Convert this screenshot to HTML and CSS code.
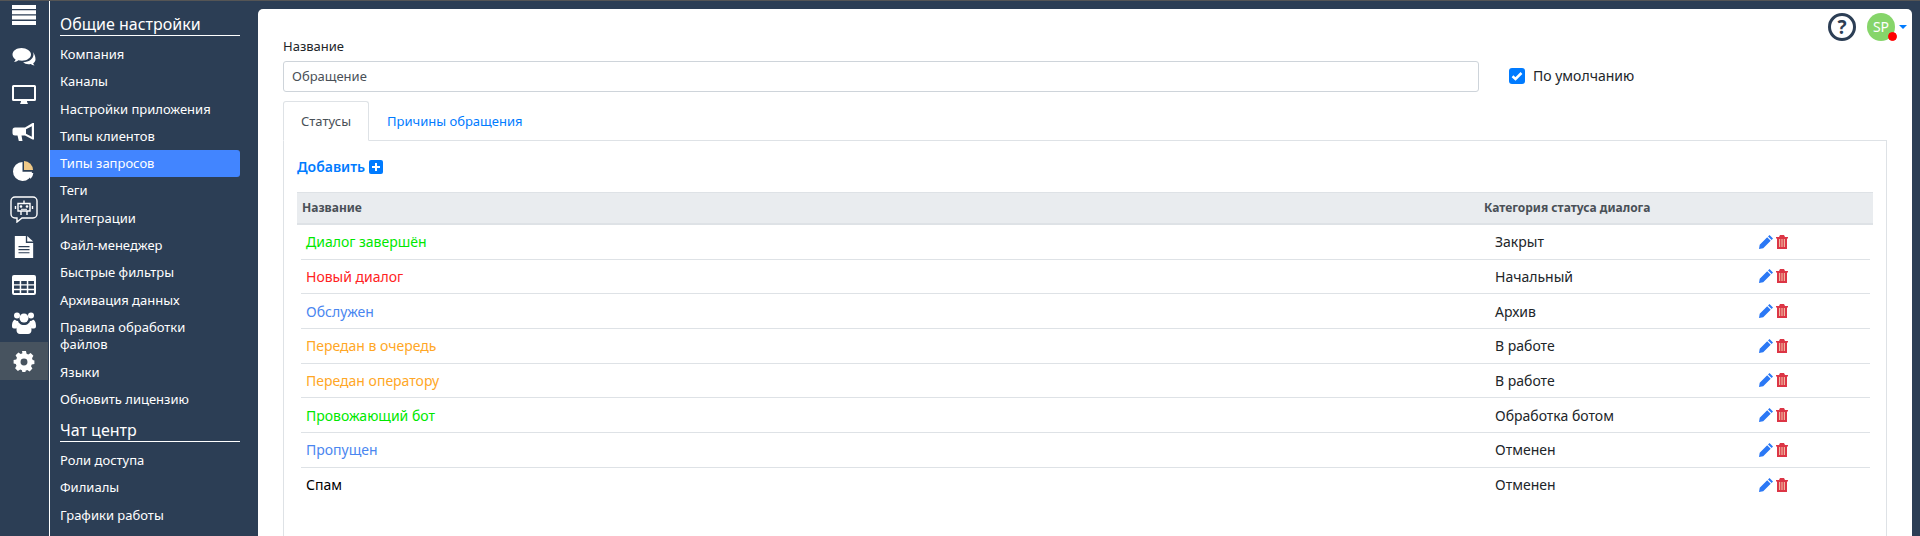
FILE: index.html
```html
<!DOCTYPE html>
<html lang="ru">
<head>
    <meta charset="UTF-8">
    <title>Типы запросов</title>
    <link rel="stylesheet" href="styles.css">
</head>
<body>
    <div class="app">
        <!-- Иконки разделов -->
        <nav class="rail">
            <a class="rail-item rail-top"><svg viewBox="0 0 24 20"><path d="M0 0h24v4H0zM0 5.300h24v4H0zM0 10.600h24v4H0zM0 15.900h24v4H0z"/></svg></a>
            <a class="rail-item"><svg viewBox="0 0 24 20"><path d="M9.500 1C4.500 1 .5 3.900.5 7.500c0 2 1.200 3.700 3.100 4.900-.3 1.100-1 2-1.700 2.700 1.600-.2 3.200-.9 4.400-1.800 1.100.3 2.300.4 3.700.4 5 0 9-2.800 9-6.200S14.500 1 9.500 1z"/><path d="M20.700 4.800c.5.800.8 1.700.8 2.700 0 4.400-4.600 7.600-10.400 7.800 1.300 1.300 3.300 2 5.400 2 .8 0 1.500-.1 2.200-.3 1 .8 2.300 1.400 3.800 1.600-.6-.7-1.100-1.500-1.300-2.300 1.500-1 2.300-2.300 2.300-3.800 0-3-1-5.500-2.800-7.700z"/></svg></a>
            <a class="rail-item"><svg viewBox="0 0 24 20"><path fill-rule="evenodd" d="M1.500 0h21A1.500 1.500 0 0 1 24 1.500v13a1.500 1.500 0 0 1-1.500 1.500H15c0 1.200.5 2 1 3H8c.5-1 1-1.800 1-3H1.500A1.500 1.500 0 0 1 0 14.500v-13A1.500 1.500 0 0 1 1.500 0zM2 2v12h20V2z"/></svg></a>
            <a class="rail-item"><svg viewBox="0 0 24 20"><path fill-rule="evenodd" d="M22 0v16.500h-1.500L13 12.500H9.500l1 5.500H6.800L5.500 12.500H3a2.500 2.500 0 0 1-2.500-2.500V7A2.500 2.500 0 0 1 3 4.500h10L20.500 0zM19.800 3.200 14 6.300v4.400l5.800 3.100z"/></svg></a>
            <a class="rail-item"><svg viewBox="0 0 24 22"><path d="M10.500 2a9.500 9.500 0 1 0 9.500 9.800h-9.500z"/><path fill="#f0c987" d="M12 1v9h9a9 9 0 0 0-9-9z"/><path d="M12.500 1.200v8.300h8.200a8.500 8.500 0 0 0-1-3.300l-4.700 3 2.900-5.200a8.500 8.500 0 0 0-5.400-2.800z" fill="#fff" opacity="0"/><path d="M13 13l8.300 0a9.500 9.500 0 0 1-2.600 5.800z"/></svg></a>
            <a class="rail-item rail-bot"><svg viewBox="0 0 28 27"><path class="outline" d="M5 1h18a4 4 0 0 1 4 4v13a4 4 0 0 1-4 4H12l-5 4v-4H5a4 4 0 0 1-4-4V5a4 4 0 0 1 4-4z"/><path class="outline" d="M8 7.500h12v7.500H8zM5.500 10v3M22.500 10v3M14 4.500v3M11 15v4M17 15v4"/><circle cx="11" cy="10.500" r="1.300"/><circle cx="17" cy="10.500" r="1.300"/><path d="M11 12.800h6v1h-6z"/></svg></a>
            <a class="rail-item"><svg viewBox="0 0 20 24"><path d="M0 0h12v7.500h8V24H0z"/><path d="M13.500 0 20 6h-6.500z"/><path class="cut" d="M4 11h12v1.300H4zM4 14.300h12v1.300H4zM4 17.600h12v1.300H4z"/></svg></a>
            <a class="rail-item"><svg viewBox="0 0 24 20"><path fill-rule="evenodd" d="M2 0h20a2 2 0 0 1 2 2v16a2 2 0 0 1-2 2H2a2 2 0 0 1-2-2V2a2 2 0 0 1 2-2zM2 6v3.200h5.700V6zm7.200 0v3.200h5.600V6zm7.100 0v3.200H22V6zM2 10.600v3.200h5.700v-3.200zm7.200 0v3.200h5.600v-3.200zm7.100 0v3.200H22v-3.200zM2 15.200V18h5.700v-2.800zm7.200 0V18h5.600v-2.800zm7.100 0V18H22v-2.800z"/></svg></a>
            <a class="rail-item"><svg viewBox="0 0 24 22"><circle cx="5" cy="3.500" r="3"/><circle cx="19" cy="3.500" r="3"/><circle cx="12" cy="6" r="4.500"/><path d="M0 14c0-4 1.500-6.300 3-6.300.8.800 1.800 1.200 3 1.200.3 1.300 1 2.400 2 3.200-1.800.8-3 2.500-3.300 4.400H2c-1.200 0-2-.8-2-2.500zM24 14c0-4-1.500-6.300-3-6.300-.8.800-1.800 1.200-3 1.200-.3 1.300-1 2.400-2 3.200 1.800.8 3 2.500 3.300 4.400H22c1.200 0 2-.8 2-2.500z"/><path d="M7.500 11.500c1.200 1 2.800 1.500 4.500 1.500s3.300-.5 4.500-1.500c1.800.5 3 3 3 6.500 0 2.500-1.500 4-3.500 4H8c-2 0-3.500-1.500-3.500-4 0-3.500 1.200-6 3-6.500z"/></svg></a>
            <a class="rail-item active"><svg viewBox="0 0 20 20"><path fill-rule="evenodd" d="M8 0h4l.6 2.700 1.700.7L16.700 2l2.800 2.800-1.400 2.400.7 1.700L20.500 9.500v3.500l-2.700.6-.7 1.700 1.400 2.400-2.800 2.800-2.400-1.400-1.700.7L11.500 22h-3l-.6-2.700-1.700-.7-2.400 1.400L1 17.200l1.400-2.400-.7-1.700L-.5 12.500V9l2.700-.6.7-1.700L1.500 4.300 4.300 1.500l2.400 1.400 1.700-.7zM10 7.500a3.500 3.500 0 1 0 0 7 3.500 3.500 0 0 0 0-7z" transform="translate(1 1) scale(.9)"/></svg></a>
        </nav>

        <!-- Меню настроек -->
        <aside class="menu">
            <h4>Общие настройки</h4>
            <a>Компания</a>
            <a>Каналы</a>
            <a>Настройки приложения</a>
            <a>Типы клиентов</a>
            <a class="current">Типы запросов</a>
            <a>Теги</a>
            <a>Интеграции</a>
            <a>Файл-менеджер</a>
            <a>Быстрые фильтры</a>
            <a>Архивация данных</a>
            <a>Правила обработки файлов</a>
            <a>Языки</a>
            <a>Обновить лицензию</a>
            <h4 class="second">Чат центр</h4>
            <a>Роли доступа</a>
            <a>Филиалы</a>
            <a>Графики работы</a>
        </aside>

        <main class="content">
            <div class="user-bar">
                <span class="help">?</span>
                <span class="avatar">SP<i class="dot"></i></span>
                <span class="caret"></span>
            </div>

            <div class="form-row">
                <div class="field">
                    <label>Название</label>
                    <div class="text-input">Обращение</div>
                </div>
                <div class="default-check">
                    <span class="check"><svg viewBox="0 0 16 16"><path d="M3.500 8.300 6.500 11l6-6" fill="none" stroke="#fff" stroke-width="2.500"/></svg></span>
                    По умолчанию
                </div>
            </div>

            <div class="tabs">
                <a class="tab selected">Статусы</a>
                <a class="tab">Причины обращения</a>
            </div>

            <section class="panel">
                <a class="add">Добавить <span class="plus"><svg viewBox="0 0 14 14"><path d="M6 3h2v3h3v2H8v3H6V8H3V6h3z" fill="#fff"/></svg></span></a>

                <div class="table-head">
                    <span>Название</span>
                    <span>Категория статуса диалога</span>
                </div>

                <div class="row"><span class="c-green">Диалог завершён</span><span>Закрыт</span><span class="actions"><svg class="pencil" viewBox="0 0 14 14"><path d="M10.500 0 14 3.500 12.600 5 9 1.500zM8.200 2.300l3.500 3.500-7.500 7.500L0 14l.7-4.200z"/></svg><svg class="trash" viewBox="0 0 12 14"><path d="M4 0h4l1 2h3v1.500h-1V14H1V3.500H0V2h3z"/><path class="slots" d="M3 4h1.200v8H3zM5.400 4h1.200v8H5.400zM7.800 4H9v8H7.800z"/></svg></span></div>
                <div class="row"><span class="c-red">Новый диалог</span><span>Начальный</span><span class="actions"><svg class="pencil" viewBox="0 0 14 14"><path d="M10.500 0 14 3.500 12.600 5 9 1.500zM8.200 2.300l3.500 3.500-7.500 7.500L0 14l.7-4.200z"/></svg><svg class="trash" viewBox="0 0 12 14"><path d="M4 0h4l1 2h3v1.500h-1V14H1V3.500H0V2h3z"/><path class="slots" d="M3 4h1.200v8H3zM5.400 4h1.200v8H5.400zM7.800 4H9v8H7.800z"/></svg></span></div>
                <div class="row"><span class="c-blue">Обслужен</span><span>Архив</span><span class="actions"><svg class="pencil" viewBox="0 0 14 14"><path d="M10.500 0 14 3.500 12.600 5 9 1.500zM8.200 2.300l3.500 3.500-7.500 7.500L0 14l.7-4.200z"/></svg><svg class="trash" viewBox="0 0 12 14"><path d="M4 0h4l1 2h3v1.500h-1V14H1V3.500H0V2h3z"/><path class="slots" d="M3 4h1.200v8H3zM5.400 4h1.200v8H5.400zM7.800 4H9v8H7.800z"/></svg></span></div>
                <div class="row"><span class="c-orange">Передан в очередь</span><span>В работе</span><span class="actions"><svg class="pencil" viewBox="0 0 14 14"><path d="M10.500 0 14 3.500 12.600 5 9 1.500zM8.200 2.300l3.500 3.500-7.500 7.500L0 14l.7-4.200z"/></svg><svg class="trash" viewBox="0 0 12 14"><path d="M4 0h4l1 2h3v1.500h-1V14H1V3.500H0V2h3z"/><path class="slots" d="M3 4h1.200v8H3zM5.400 4h1.200v8H5.400zM7.800 4H9v8H7.800z"/></svg></span></div>
                <div class="row"><span class="c-orange">Передан оператору</span><span>В работе</span><span class="actions"><svg class="pencil" viewBox="0 0 14 14"><path d="M10.500 0 14 3.500 12.600 5 9 1.500zM8.200 2.300l3.500 3.500-7.500 7.500L0 14l.7-4.200z"/></svg><svg class="trash" viewBox="0 0 12 14"><path d="M4 0h4l1 2h3v1.500h-1V14H1V3.500H0V2h3z"/><path class="slots" d="M3 4h1.200v8H3zM5.400 4h1.200v8H5.400zM7.800 4H9v8H7.800z"/></svg></span></div>
                <div class="row"><span class="c-green">Провожающий бот</span><span>Обработка ботом</span><span class="actions"><svg class="pencil" viewBox="0 0 14 14"><path d="M10.500 0 14 3.500 12.600 5 9 1.500zM8.200 2.300l3.500 3.500-7.500 7.500L0 14l.7-4.200z"/></svg><svg class="trash" viewBox="0 0 12 14"><path d="M4 0h4l1 2h3v1.500h-1V14H1V3.500H0V2h3z"/><path class="slots" d="M3 4h1.200v8H3zM5.400 4h1.200v8H5.400zM7.800 4H9v8H7.800z"/></svg></span></div>
                <div class="row"><span class="c-blue">Пропущен</span><span>Отменен</span><span class="actions"><svg class="pencil" viewBox="0 0 14 14"><path d="M10.500 0 14 3.500 12.600 5 9 1.500zM8.200 2.300l3.500 3.500-7.500 7.500L0 14l.7-4.200z"/></svg><svg class="trash" viewBox="0 0 12 14"><path d="M4 0h4l1 2h3v1.500h-1V14H1V3.500H0V2h3z"/><path class="slots" d="M3 4h1.200v8H3zM5.400 4h1.200v8H5.400zM7.800 4H9v8H7.800z"/></svg></span></div>
                <div class="row last"><span class="c-black">Спам</span><span>Отменен</span><span class="actions"><svg class="pencil" viewBox="0 0 14 14"><path d="M10.500 0 14 3.500 12.600 5 9 1.500zM8.200 2.300l3.500 3.500-7.500 7.500L0 14l.7-4.200z"/></svg><svg class="trash" viewBox="0 0 12 14"><path d="M4 0h4l1 2h3v1.500h-1V14H1V3.500H0V2h3z"/><path class="slots" d="M3 4h1.200v8H3zM5.400 4h1.200v8H5.400zM7.800 4H9v8H7.800z"/></svg></span></div>
            </section>
        </main>
    </div>
</body>
</html>
```

FILE: styles.css
```css
* {
    margin: 0;
    padding: 0;
    box-sizing: border-box;
}

body {
    font-family: "Noto Sans", sans-serif;
    font-size: 14px;
    color: #212529;
    background: #2c3e55;
    height: 536px;
    overflow: hidden;
}

.app {
    display: flex;
    height: 536px;
    border-top: 1px solid #555;
    overflow: hidden;
}

/* Иконки разделов */
.rail {
    flex: 0 0 50px;
    border-right: 1px solid #fff;
    display: flex;
    flex-direction: column;
    padding-right: 1px;
}

.rail-item {
    height: 38px;
    display: flex;
    align-items: center;
    justify-content: center;
    fill: #fff;
}

.rail-item svg {
    width: 24px;
    height: 22px;
}

.rail-top {
    height: 28px;
    margin-bottom: 9px;
}

.rail-bot svg {
    width: 28px;
    height: 27px;
}

.rail-bot .outline {
    fill: none;
    stroke: #fff;
    stroke-width: 1.400;
}

.cut {
    fill: #2c3e55;
}

.active {
    background: #47535f;
}

/* Меню настроек */
.menu {
    flex: 0 0 190px;
    color: #fff;
    padding-top: 13px;
}

.menu h4 {
    font-size: 16px;
    font-weight: 400;
    line-height: 21px;
    margin-left: 10px;
    border-bottom: 1px solid #fff;
    margin-bottom: 5px;
}

.menu h4.second {
    margin-top: 7px;
}

.menu a {
    display: block;
    padding: 5px 10px;
    font-size: 13px;
    line-height: 17.300px;
}

.menu a.current {
    background: #4285ff;
    border-radius: 0 3px 3px 0;
}

/* Основная часть */
.content {
    flex: 1;
    position: relative;
    background: #fff;
    margin: 8px 8px 0 18px;
    border-radius: 5px 5px 0 0;
    padding: 28px 25px 0 25px;
}

.user-bar {
    position: absolute;
    top: 4px;
    right: 5px;
    display: flex;
    align-items: center;
}

.help {
    width: 28px;
    height: 28px;
    border: 3px solid #2c3e55;
    border-radius: 50%;
    color: #2c3e55;
    font-size: 19px;
    font-weight: 700;
    line-height: 22px;
    text-align: center;
    margin-right: 11px;
}

.avatar {
    position: relative;
    width: 28px;
    height: 28px;
    border-radius: 50%;
    background: #86d56a;
    color: #fff;
    font-size: 14px;
    line-height: 28px;
    text-align: center;
}

.dot {
    position: absolute;
    right: -2px;
    bottom: 0;
    width: 9px;
    height: 9px;
    border-radius: 50%;
    background: #f00;
    border: 1px solid #f00;
}

.caret {
    margin-left: 4px;
    border-top: 4px solid #007bff;
    border-left: 4px solid transparent;
    border-right: 4px solid transparent;
}

.form-row {
    display: flex;
    align-items: flex-end;
}

.field {
    width: 1196px;
}

.field label {
    display: block;
    font-size: 13px;
    line-height: 18px;
    margin-bottom: 6px;
}

.text-input {
    height: 31px;
    border: 1px solid #ced4da;
    border-radius: 3px;
    padding: 0 8px;
    font-size: 13px;
    line-height: 29px;
    color: #495057;
}

.default-check {
    display: flex;
    align-items: center;
    margin-left: 30px;
    height: 31px;
    font-size: 14px;
    padding-bottom: 2px;
}

.check {
    width: 16px;
    height: 16px;
    background: #007bff;
    border-radius: 3px;
    margin-right: 8px;
}

.check svg {
    display: block;
}

/* Вкладки */
.tabs {
    display: flex;
    margin-top: 9px;
    position: relative;
    z-index: 1;
}

.tab {
    height: 40px;
    padding: 0 17px;
    font-size: 13px;
    line-height: 39px;
    color: #007bff;
    border: 1px solid transparent;
}

.tab.selected {
    color: #495057;
    background: #fff;
    border-color: #dee2e6 #dee2e6 #fff;
    border-radius: 3px 3px 0 0;
}

.panel {
    border: 1px solid #dee2e6;
    margin-top: -1px;
    height: 400px;
    padding: 16px 13px 0 13px;
}

.add {
    display: flex;
    align-items: center;
    color: #007bff;
    font-size: 14px;
    font-weight: 600;
    line-height: 20px;
    gap: 4px;
    margin-bottom: 15px;
}

.plus {
    width: 14px;
    height: 14px;
    background: #007bff;
    border-radius: 2px;
}

.plus svg {
    display: block;
}

.table-head {
    display: grid;
    grid-template-columns: 1182px 1fr;
    height: 33px;
    padding-left: 5px;
    background: #e9ecef;
    border-top: 1px solid #dee2e6;
    border-bottom: 2px solid #dee2e6;
    font-size: 12px;
    font-weight: 700;
    line-height: 29px;
    color: #495057;
}

.row {
    display: grid;
    grid-template-columns: 1194px 264px 1fr;
    align-items: center;
    height: 34.670px;
    margin: 0 3px 0 4px;
    border-bottom: 1px solid #dee2e6;
    font-size: 14px;
}

.row > span:first-child {
    padding-left: 5px;
}

.row.last {
    border-bottom: 0;
}

.c-green { color: #00e800; }
.c-red { color: #f22; }
.c-blue { color: #4a86f0; }
.c-orange { color: #ffa726; }
.c-black { color: #000; }

.actions {
    display: flex;
    align-items: center;
    gap: 3px;
}

.pencil {
    width: 14px;
    height: 14px;
    fill: #2b78f5;
}

.trash {
    width: 12px;
    height: 14px;
    fill: #dc3545;
}

.slots {
    fill: #efb8a0;
}
```
